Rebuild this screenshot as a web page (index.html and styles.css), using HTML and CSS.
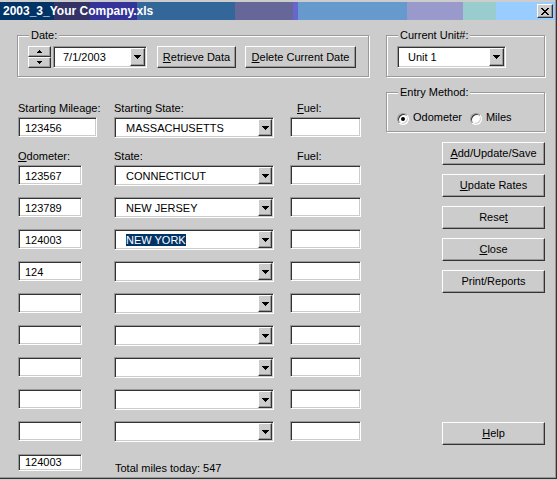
FILE: index.html
```html
<!DOCTYPE html>
<html>
<head>
<meta charset="utf-8">
<title>2003_3_Your Company.xls</title>
<link rel="stylesheet" href="styles.css">
</head>
<body>
<div class="window">
  <div class="titlebar">
    <span class="title">2003_3_Your Company.xls</span>
    <div class="close-btn">
      <svg width="8" height="7" viewBox="0 0 8 7" shape-rendering="crispEdges"><path d="M0 0h2v1H0zM6 0h2v1H6zM1 1h2v1H1zM5 1h2v1H5zM2 2h4v1H2zM3 3h2v1H3zM2 4h4v1H2zM1 5h2v1H1zM5 5h2v1H5zM0 6h2v1H0zM6 6h2v1H6z"/></svg>
    </div>
  </div>
  <div class="client">
    <div class="left">
      <div class="group date-group">
        <span class="group-title">Date:</span>
        <div class="spin">
          <div class="spin-btn"><svg width="5" height="3" viewBox="0 0 5 3" shape-rendering="crispEdges"><path d="M2 0h1v1H2zM1 1h3v1H1zM0 2h5v1H0z"/></svg></div>
          <div class="spin-btn"><svg width="5" height="3" viewBox="0 0 5 3" shape-rendering="crispEdges"><path d="M0 0h5v1H0zM1 1h3v1H1zM2 2h1v1H2z"/></svg></div>
        </div>
        <div class="combo date-combo">
          <span class="combo-text">7/1/2003</span>
          <div class="drop wide"><svg width="7" height="4" viewBox="0 0 7 4" shape-rendering="crispEdges"><path d="M0 0h7v1H0zM1 1h5v1H1zM2 2h3v1H2zM3 3h1v1H3z"/></svg></div>
        </div>
        <div class="btn btn-retrieve"><span><u>R</u>etrieve Data</span></div>
        <div class="btn btn-delete"><span><u>D</u>elete Current Date</span></div>
      </div>

      <div class="form">
        <div class="line labels">
          <div>Starting Mileage:</div>
          <div>Starting State:</div>
          <div class="fuel-lbl"><u>F</u>uel:</div>
        </div>
        <div class="line start">
          <div class="field w-start">123456</div>
          <div class="combo state-combo"><span class="combo-text">MASSACHUSETTS</span><div class="drop"><svg width="7" height="4" viewBox="0 0 7 4" shape-rendering="crispEdges"><path d="M0 0h7v1H0zM1 1h5v1H1zM2 2h3v1H2zM3 3h1v1H3z"/></svg></div></div>
          <div class="field w-fuel"></div>
        </div>
        <div class="line labels labels2">
          <div><u>O</u>dometer:</div>
          <div>State:</div>
          <div class="fuel-lbl">Fuel:</div>
        </div>
        <div class="rows">
          <div class="line">
            <div class="field w-odo">123567</div>
            <div class="combo state-combo"><span class="combo-text">CONNECTICUT</span><div class="drop"><svg width="7" height="4" viewBox="0 0 7 4" shape-rendering="crispEdges"><path d="M0 0h7v1H0zM1 1h5v1H1zM2 2h3v1H2zM3 3h1v1H3z"/></svg></div></div>
            <div class="field w-fuel"></div>
          </div>
          <div class="line">
            <div class="field w-odo">123789</div>
            <div class="combo state-combo"><span class="combo-text">NEW JERSEY</span><div class="drop"><svg width="7" height="4" viewBox="0 0 7 4" shape-rendering="crispEdges"><path d="M0 0h7v1H0zM1 1h5v1H1zM2 2h3v1H2zM3 3h1v1H3z"/></svg></div></div>
            <div class="field w-fuel"></div>
          </div>
          <div class="line">
            <div class="field w-odo">124003</div>
            <div class="combo state-combo"><span class="combo-text"><span class="sel">NEW YORK</span></span><div class="drop"><svg width="7" height="4" viewBox="0 0 7 4" shape-rendering="crispEdges"><path d="M0 0h7v1H0zM1 1h5v1H1zM2 2h3v1H2zM3 3h1v1H3z"/></svg></div></div>
            <div class="field w-fuel"></div>
          </div>
          <div class="line">
            <div class="field w-odo">124</div>
            <div class="combo state-combo"><span class="combo-text"></span><div class="drop"><svg width="7" height="4" viewBox="0 0 7 4" shape-rendering="crispEdges"><path d="M0 0h7v1H0zM1 1h5v1H1zM2 2h3v1H2zM3 3h1v1H3z"/></svg></div></div>
            <div class="field w-fuel"></div>
          </div>
          <div class="line">
            <div class="field w-odo"></div>
            <div class="combo state-combo"><span class="combo-text"></span><div class="drop"><svg width="7" height="4" viewBox="0 0 7 4" shape-rendering="crispEdges"><path d="M0 0h7v1H0zM1 1h5v1H1zM2 2h3v1H2zM3 3h1v1H3z"/></svg></div></div>
            <div class="field w-fuel"></div>
          </div>
          <div class="line">
            <div class="field w-odo"></div>
            <div class="combo state-combo"><span class="combo-text"></span><div class="drop"><svg width="7" height="4" viewBox="0 0 7 4" shape-rendering="crispEdges"><path d="M0 0h7v1H0zM1 1h5v1H1zM2 2h3v1H2zM3 3h1v1H3z"/></svg></div></div>
            <div class="field w-fuel"></div>
          </div>
          <div class="line">
            <div class="field w-odo"></div>
            <div class="combo state-combo"><span class="combo-text"></span><div class="drop"><svg width="7" height="4" viewBox="0 0 7 4" shape-rendering="crispEdges"><path d="M0 0h7v1H0zM1 1h5v1H1zM2 2h3v1H2zM3 3h1v1H3z"/></svg></div></div>
            <div class="field w-fuel"></div>
          </div>
          <div class="line">
            <div class="field w-odo"></div>
            <div class="combo state-combo"><span class="combo-text"></span><div class="drop"><svg width="7" height="4" viewBox="0 0 7 4" shape-rendering="crispEdges"><path d="M0 0h7v1H0zM1 1h5v1H1zM2 2h3v1H2zM3 3h1v1H3z"/></svg></div></div>
            <div class="field w-fuel"></div>
          </div>
          <div class="line">
            <div class="field w-odo"></div>
            <div class="combo state-combo"><span class="combo-text"></span><div class="drop"><svg width="7" height="4" viewBox="0 0 7 4" shape-rendering="crispEdges"><path d="M0 0h7v1H0zM1 1h5v1H1zM2 2h3v1H2zM3 3h1v1H3z"/></svg></div></div>
            <div class="field w-fuel"></div>
          </div>
        </div>
        <div class="line final">
          <div class="field w-odo short">124003</div>
          <div class="total">Total miles today: 547</div>
        </div>
      </div>
    </div>

    <div class="right">
      <div class="group unit-group">
        <span class="group-title">Current Unit#:</span>
        <div class="combo unit-combo">
          <span class="combo-text">Unit 1</span>
          <div class="drop wide"><svg width="7" height="4" viewBox="0 0 7 4" shape-rendering="crispEdges"><path d="M0 0h7v1H0zM1 1h5v1H1zM2 2h3v1H2zM3 3h1v1H3z"/></svg></div>
        </div>
      </div>
      <div class="group entry-group">
        <span class="group-title">Entry Method:</span>
        <div class="radio-row">
          <div class="radio"><span class="dot"></span></div>
          <span class="radio-label">Odometer</span>
          <div class="radio second"></div>
          <span class="radio-label">Miles</span>
        </div>
      </div>
      <div class="btn side-btn first"><span><u>A</u>dd/Update/Save</span></div>
      <div class="btn side-btn"><span><u>U</u>pdate Rates</span></div>
      <div class="btn side-btn"><span>Rese<u>t</u></span></div>
      <div class="btn side-btn"><span><u>C</u>lose</span></div>
      <div class="btn side-btn"><span>Print/Reports</span></div>
      <div class="btn side-btn help"><span><u>H</u>elp</span></div>
    </div>
  </div>
</div>
</body>
</html>
```

FILE: styles.css
```css
* { box-sizing: border-box; }

html, body {
  margin: 0;
  padding: 0;
}

body {
  width: 557px;
  height: 480px;
  overflow: hidden;
  background: #cccccc;
  font-family: "Liberation Sans", Arial, sans-serif;
  font-size: 11px;
  line-height: 13px;
  color: #000;
}

u { text-decoration: underline; text-underline-offset: 1px; }

.window {
  width: 557px;
  height: 479px;
  padding: 2px 2px 0 0;
  box-shadow: inset -1px -1px 0 #333333, inset -2px -2px 0 #999999;
  display: flex;
  flex-direction: column;
}

.titlebar {
  height: 18px;
  flex: none;
  display: flex;
  align-items: flex-start;
  background: linear-gradient(to right,
    #003366 0, #003366 54px,
    #333366 54px, #333366 90px,
    #333399 90px, #333399 137px,
    #336699 137px, #336699 235px,
    #666699 235px, #666699 293px,
    #6666cc 293px, #6666cc 298px,
    #6699cc 298px, #6699cc 407px,
    #9999cc 407px, #9999cc 463px,
    #99cccc 463px, #99cccc 496px,
    #99ccff 496px, #99ccff 100%);
}

.title {
  color: #fff;
  font-weight: bold;
  font-size: 12px;
  line-height: 18px;
  padding-left: 3px;
  white-space: nowrap;
}

.close-btn {
  margin: 2px 2px 0 auto;
  width: 16px;
  height: 14px;
  background: #cccccc;
  border: 1px solid;
  border-color: #ffffff #333333 #333333 #ffffff;
  box-shadow: inset -1px -1px 0 #999999;
  display: flex;
  align-items: center;
  justify-content: center;
}

.client {
  display: flex;
  padding: 15px 0 0 17px;
}

.left {
  width: 352px;
  display: flex;
  flex-direction: column;
}

.right {
  width: 159px;
  margin-left: 17px;
  display: flex;
  flex-direction: column;
}

/* group boxes */
.group {
  position: relative;
  border: 1px solid #999999;
  box-shadow: inset 1px 1px 0 #ffffff, 1px 1px 0 #ffffff;
}

.group-title {
  position: absolute;
  top: -7px;
  left: 11px;
  padding: 0 2px;
  background: #cccccc;
  white-space: nowrap;
}

.date-group {
  height: 42px;
  padding: 10px 0 0 10px;
  display: flex;
  align-items: flex-start;
}

.unit-group {
  height: 42px;
  padding: 10px 0 0 10px;
  display: flex;
  align-items: flex-start;
}

.entry-group {
  margin-top: 15px;
  height: 40px;
  padding: 20px 0 0 10px;
}

/* raised controls */
.btn, .spin-btn, .drop {
  background: #cccccc;
  border: 1px solid;
  border-color: #ffffff #333333 #333333 #ffffff;
  box-shadow: inset -1px -1px 0 #999999;
  display: flex;
  align-items: center;
  justify-content: center;
}

.btn {
  height: 22px;
  white-space: nowrap;
}

.btn-retrieve { width: 79px; margin-left: 10px; }
.btn-delete { width: 111px; margin-left: 9px; }

.side-btn {
  width: 103px;
  height: 23px;
  align-self: flex-end;
  margin-top: 9px;
}
.side-btn.first { margin-top: 10px; }
.side-btn.help { margin-top: 129px; }

.spin {
  width: 23px;
  display: flex;
  flex-direction: column;
}

.spin-btn { height: 11px; }

/* sunken controls */
.field, .combo {
  background: #ffffff;
  border: 1px solid;
  border-color: #999999 #ffffff #ffffff #999999;
  box-shadow: inset 1px 1px 0 #333333, inset -1px -1px 0 #cccccc;
}

.field {
  height: 20px;
  padding: 1px 0 0 6px;
  line-height: 18px;
  white-space: nowrap;
}
.field.short { height: 17px; padding-top: 0; line-height: 15px; }

.w-start { width: 79px; }
.w-odo { width: 64px; }
.w-fuel { width: 71px; }

.combo {
  display: flex;
  align-items: stretch;
  padding: 1px;
}

.combo-text {
  flex: 1;
  align-self: center;
  padding: 1px 0 0 10px;
  white-space: nowrap;
}

.state-combo { width: 160px; height: 21px; }

.date-combo { width: 94px; height: 22px; margin-left: 2px; }
.date-combo .combo-text { padding-left: 8px; }

.unit-combo { width: 109px; height: 22px; }
.unit-combo .combo-text { padding-left: 9px; }

.drop { width: 14px; }
.drop.wide { width: 15px; }

.sel {
  background: #003366;
  color: #ffffff;
}

/* form grid */
.form {
  margin-top: 25px;
  margin-left: 1px;
  display: flex;
  flex-direction: column;
}

.line {
  display: grid;
  grid-template-columns: 96px 176px 71px;
  align-items: start;
}

.labels { white-space: nowrap; }
.start { margin-top: 2px; }
.labels2 { margin-top: 12px; }

.fuel-lbl { padding-left: 7px; }

.rows {
  margin-top: 2px;
  display: flex;
  flex-direction: column;
  gap: 11px;
}

.final { margin-top: 12px; }

.total {
  margin-top: 8px;
  padding-left: 1px;
  white-space: nowrap;
}

/* radios */
.radio-row {
  display: flex;
  align-items: flex-start;
}

.radio {
  width: 12px;
  height: 12px;
  border-radius: 50%;
  background: #ffffff;
  border: 1px solid;
  border-color: #999999 #ffffff #ffffff #999999;
  box-shadow: inset 1px 1px 0 #333333, inset -1px -1px 0 #cccccc;
  display: flex;
  align-items: center;
  justify-content: center;
}
.radio.second { margin-left: 8px; }

.dot {
  width: 4px;
  height: 4px;
  border-radius: 50%;
  background: #000000;
}

.radio-label {
  margin: -2px 0 0 4px;
  white-space: nowrap;
}
```
